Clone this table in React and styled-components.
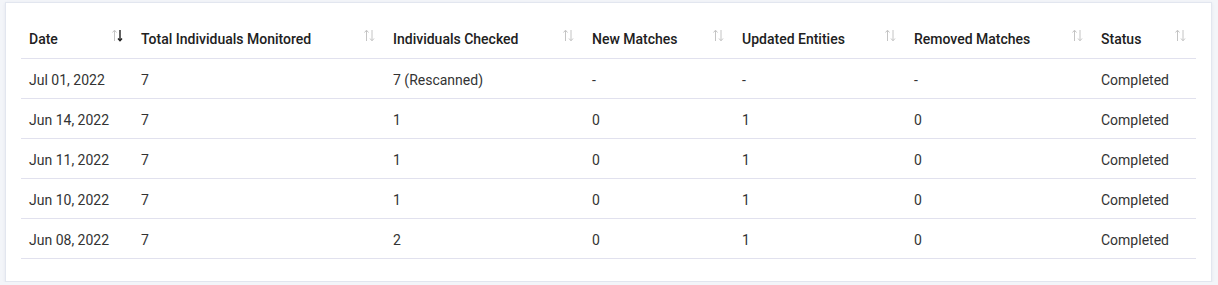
import styled, { createGlobalStyle } from "styled-components";

const GlobalStyle = createGlobalStyle`
  body {
    margin: 0;
    padding: 2px 6px 0 5px;
    background: #f3f5f9;
    font-family: Roboto, "Liberation Sans", sans-serif;
  }
`;

const columns = [
  { key: "date", label: "Date", width: 112, active: true },
  { key: "total", label: "Total Individuals Monitored", width: 252 },
  { key: "checked", label: "Individuals Checked", width: 199 },
  { key: "newMatches", label: "New Matches", width: 150 },
  { key: "updated", label: "Updated Entities", width: 172 },
  { key: "removed", label: "Removed Matches", width: 187 },
  { key: "status", label: "Status", width: 103 },
];

const rows = [
  { date: "Jul 01, 2022", total: "7", checked: "7 (Rescanned)", newMatches: "-", updated: "-", removed: "-", status: "Completed" },
  { date: "Jun 14, 2022", total: "7", checked: "1", newMatches: "0", updated: "1", removed: "0", status: "Completed" },
  { date: "Jun 11, 2022", total: "7", checked: "1", newMatches: "0", updated: "1", removed: "0", status: "Completed" },
  { date: "Jun 10, 2022", total: "7", checked: "1", newMatches: "0", updated: "1", removed: "0", status: "Completed" },
  { date: "Jun 08, 2022", total: "7", checked: "2", newMatches: "0", updated: "1", removed: "0", status: "Completed" },
];

const SortIcon = ({ active }) => (
  <svg width="11" height="13" viewBox="0 0 11 13" fill="none">
    <g stroke="#c4c4c4" strokeWidth="1">
      <path d="M2.5 12V1.5" />
      <path d="M0.5 3.5L2.5 1.2L4.5 3.5" />
    </g>
    <g stroke={active ? "#222" : "#c4c4c4"} strokeWidth={active ? 1.4 : 1}>
      <path d="M8 1V11.5" />
      <path d="M6 9.5L8 11.8L10 9.5" />
    </g>
  </svg>
);

const App = () => (
  <>
    <GlobalStyle />
    <Card>
      <Table>
        <colgroup>
          {columns.map((c) => (
            <col key={c.key} style={{ width: c.width }} />
          ))}
        </colgroup>
        <thead>
          <tr>
            {columns.map((c) => (
              <Th key={c.key}>
                <HeadInner>
                  <span>{c.label}</span>
                  <SortIcon active={c.active} />
                </HeadInner>
              </Th>
            ))}
          </tr>
        </thead>
        <tbody>
          {rows.map((r, i) => (
            <tr key={i}>
              {columns.map((c) => (
                <Td key={c.key}>{r[c.key]}</Td>
              ))}
            </tr>
          ))}
        </tbody>
      </Table>
    </Card>
  </>
);

const Card = styled.div`
  background: #fff;
  border: 1px solid #e2e6ef;
  box-shadow: 0 1px 3px rgba(40, 50, 90, 0.08);
  padding: 16px 15px 22px 15px;
`;

const Table = styled.table`
  width: 1175px;
  border-collapse: collapse;
  table-layout: fixed;
`;

const Th = styled.th`
  height: 39px;
  padding: 0 10px 0 8px;
  text-align: left;
  font-size: 14px;
  font-weight: 500;
  color: #212121;
  border-bottom: 1px solid #e1e1ee;
`;

const HeadInner = styled.div`
  display: flex;
  align-items: center;
  justify-content: space-between;
  svg {
    flex-shrink: 0;
    margin-top: -6px;
  }
`;

const Td = styled.td`
  height: 37px;
  padding: 2px 8px 0;
  font-size: 14px;
  color: #333;
  border-bottom: 1px solid #e1e1ee;
`;

export default App;
